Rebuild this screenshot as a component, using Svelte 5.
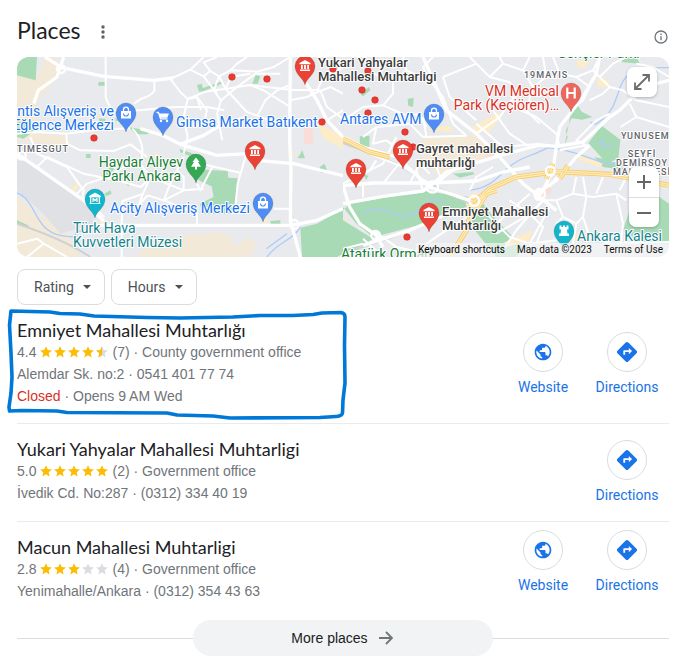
<script>
  const star = 'M7 1.2l1.7 3.9 4.2.4-3.2 2.8.9 4.2L7 10.3l-3.6 2.200.9-4.200L1.100 5.500l4.200-.4z';

  const places = [
    { name: 'Emniyet Mahallesi Muhtarlığı', rating: '4.4', full: 4, half: true, count: 7, kind: 'County government office', address: 'Alemdar Sk. no:2 · 0541 401 77 74', closed: 'Opens 9 AM Wed', website: true, marked: true },
    { name: 'Yukari Yahyalar Mahallesi Muhtarligi', rating: '5.0', full: 5, half: false, count: 2, kind: 'Government office', address: 'İvedik Cd. No:287 · (0312) 334 40 19', website: false },
    { name: 'Macun Mahallesi Muhtarligi', rating: '2.8', full: 3, half: false, count: 4, kind: 'Government office', address: 'Yenimahalle/Ankara · (0312) 354 43 63', website: true }
  ];

  // The base map is two tiles, each 978 × 600 units.
  const tiles = [
    {
      sand: [
        'M0 55L60 62 85 0H120L118 60 100 90 62 130 60 230 150 235 165 275 90 262 0 250Z',
        'M0 415L40 450 60 470 110 500 150 530 175 560 190 600H0Z',
        'M350 600L400 560 470 540 560 530 610 525 640 535 650 570 690 540 720 560 700 600Z'
      ],
      shade: ['M0 300L60 330 240 455 225 500 130 530 80 470 0 400Z'],
      park: [
        'M0 0H60L56 70 0 55Z',
        'M0 195L40 190 60 215 20 245 0 240Z',
        'M520 352L560 338 632 342 634 362 662 364 660 420 640 470 560 470 548 440 590 420 584 388 556 376Z',
        'M850 512L900 500 978 455V590L960 600H855Z',
        'M244 75H264V86H244ZM540 84L554 80 560 102 546 104ZM550 96L612 74 614 80 554 104ZM716 54L730 58 722 80 706 80Z',
        'M334 210L400 222 392 232 356 232ZM246 184L266 186 262 204 248 200ZM295 184L320 186 318 194 296 192ZM208 290L222 292 220 304 206 302Z',
        'M250 360L280 330 292 336 258 376ZM326 380L338 374 336 388ZM262 410L280 400 284 410 268 418ZM488 276L540 294 520 298 490 286Z',
        'M842 304L856 280 864 304ZM908 330L922 320 930 338 912 348ZM760 492L790 490 790 502 762 504ZM0 490L36 506 30 512 0 500Z'
      ],
      block: ['M160 400L182 372 188 382 168 410ZM408 290L424 284 414 310ZM246 488L300 520 290 530 250 500ZM736 486L752 484 752 500 736 498ZM816 300L826 280 832 300ZM900 200L978 235V275L920 245ZM865 40L880 50 870 70Z'],
      pink: ['M860 210H888V260H862Z'],
      water: ['M0 408C60 430 50 520 130 535S150 520 200 522', 'M750 600C780 555 830 550 850 510', 'M748 575L810 530'],
      rail: ['M0 500C90 530 160 560 220 600'],
      minor: [
        'M266 0V120Q275 150 290 160L370 160 440 152',
        'M412 72L412 102Q400 118 375 124L350 140',
        'M410 72L460 66 520 38 560 0',
        'M460 66L490 105 512 126 500 180 512 240 500 290',
        'M512 126L560 106 590 100 626 96 660 90 700 84 820 98 910 100',
        'M512 126L540 120 570 160 560 200 530 210',
        'M520 38L560 58 580 42 606 58 626 96 690 165 760 190 900 190',
        'M606 58L590 100 612 130 600 170 616 250',
        'M560 58L600 110M540 120L552 160',
        'M580 42L560 16 600 0M606 58L640 40 720 44 770 30 820 0',
        'M626 96L640 60 700 50M612 130L660 90 716 50 790 50',
        'M690 0L660 20 640 40M700 84L740 100 820 150',
        'M722 175L745 130 780 100 820 84',
        'M440 152L480 150 570 150 622 160',
        'M0 230L60 225 148 230 240 218 340 214',
        'M148 230L150 260 190 280 290 282 340 262 390 300',
        'M60 330L90 300 200 350 300 370 372 390 400 360 500 400 560 395',
        'M40 240L60 290 150 330 200 400 196 420',
        'M346 215Q390 260 370 320L400 360 378 410 360 460',
        'M370 320L320 330 270 360 210 380 180 410',
        'M392 415L440 430 460 380 480 340 500 300',
        'M392 415L360 450M440 430L540 470V504M480 340L500 360 500 400 440 430',
        'M540 380L550 400 586 330M560 322L672 348',
        'M688 290L662 380 656 440',
        'M770 455H820M380 410L316 432 314 500V600',
        'M196 420L262 480M0 560L60 545 80 560 150 600M80 560L30 600',
        'M900 100L920 60 978 30M910 100L930 150 978 185M866 76L890 110 930 190 978 160',
        'M890 110L940 90 978 110M820 130L870 120 890 110'
      ],
      major: [
        'M50 140L64 100 120 60 140 0',
        'M84 0L135 32 260 58 410 70 470 62',
        'M370 215L440 236 490 262 600 295 690 290 720 310 830 320 978 356',
        'M490 262L560 235 610 205 690 180',
        'M820 0L818 250 822 340 820 490 850 600',
        'M866 76L900 130 930 190 978 240',
        'M250 505H820L900 490 978 455',
        'M0 290L60 332 200 430 260 492'
      ],
      highway: [],
      junctions: [[132, 36, 12], [832, 502, 13], [14, 296, 12]]
    },
    {
      sand: ['M240 238L400 230 440 262 470 300 330 342 280 352 240 300Z', 'M0 500L10 470 22 520 0 550Z'],
      shade: [],
      park: [
        'M0 460L20 440 240 402 380 420 390 440 280 490 130 530 90 540 40 500 0 450Z',
        'M0 490L90 545 60 565 0 590Z',
        'M736 258L776 206 832 248 826 305 790 318Z',
        'M684 166L704 145 716 164 748 180 718 188 686 184 668 222 674 240 664 270Z',
        'M380 500L420 440 460 490 540 570 520 600H460Z',
        'M870 430L920 400 978 440V560L900 560 840 520Z',
        'M50 238L80 236 78 290 52 280ZM754 300L800 310 850 340 780 330ZM194 126L212 122 210 150 196 146ZM52 110L78 90 82 100 60 118ZM820 0L880 0 890 20 840 16Z',
        'M330 350L390 345 394 352 350 362ZM60 350L76 356 70 370Z'
      ],
      block: ['M386 210L470 166 476 178 440 222 400 226ZM484 556L570 520 560 550 490 570ZM664 530L740 525 720 550 670 545ZM700 10L740 14 720 34 704 30ZM760 64L800 68 790 90 766 90ZM250 220L320 205 326 225ZM366 430L400 400 410 440 380 480ZM700 290L780 320 770 330 710 310Z'],
      pink: ['M590 410L620 388 626 402 602 424ZM430 280L452 276 454 310 430 300ZM220 310L240 300 242 320Z'],
      water: [
        'M978 32C880 30 850 40 832 90S810 160 780 185 760 200 742 196',
        'M380 400C470 390 470 330 550 300S600 270 640 275 700 290 760 310 820 300 850 340',
        'M60 470C130 430 150 490 200 475S230 420 300 430',
        'M764 255L790 268 812 258M780 240V270'
      ],
      rail: ['M0 590L150 540 330 470', 'M0 258L160 320 260 380 380 440'],
      minor: [
        'M0 190L60 150 120 145 190 175 230 172 250 210',
        'M60 0L90 50 150 70 190 40 180 0M150 70L150 110 120 145M190 40L260 70 300 120 330 200',
        'M260 70L240 30 270 0M300 60L400 20 380 0M300 60L320 120 400 190',
        'M400 20L440 60 500 76 520 110 510 150 580 180 640 230 650 270',
        'M440 60L480 20 540 40 560 0M480 20L470 0M540 40L570 90 550 160 590 200',
        'M570 90L610 60 640 60M610 60L600 0M630 0L650 50 700 60 750 40 770 0',
        'M700 60L740 90 720 130 680 160M750 40L800 90 840 100 880 130 978 150',
        'M740 130L780 110 800 90M770 60L810 20 850 0M978 60L930 30 880 20',
        'M800 170L760 190 735 215 700 250 730 265 650 280',
        'M832 210L880 180 978 210M880 180L860 140',
        'M60 240L100 210 200 200 240 240 370 236',
        'M100 210L90 260 130 250 170 280M240 180L250 238M330 200L370 236',
        'M80 290L180 330 260 380M60 350L120 320 160 240M0 380L80 340 100 310M120 380L160 330 200 280',
        'M200 380L230 320 260 350M300 380L280 330 260 320M60 380V420M220 340L240 400',
        'M280 380L330 340 400 310M380 400L400 360 450 330M400 200L480 270 590 260',
        'M450 160L500 230 560 270M400 230L470 180 520 110',
        'M700 360L690 410 640 430 600 430M690 410L750 420 820 410 850 430M720 360L730 420 720 480 740 540',
        'M760 410L780 360M640 430L660 480 640 500M620 450L560 560 580 600M600 430L520 520 480 580',
        'M540 450L600 510 580 560M500 430L560 470 520 520M820 410L840 500 830 600M740 540L800 560 978 555',
        'M560 470L600 430M430 470L500 540 560 560 640 550M640 360L620 390',
        'M660 480L700 500 720 480M700 500L690 560',
        'M460 500L560 410M460 530L580 460M850 360L830 400M0 575L60 560M60 545L120 600M90 520L160 570 250 590',
        'M190 600L310 520 390 470'
      ],
      major: [
        'M0 386L90 378 260 378 400 372 480 345 560 330',
        'M0 440L120 418 240 402 270 380 310 345 470 296 590 264 640 268',
        'M0 240L60 270 160 300 260 390 380 430 400 450',
        'M0 386L20 450 50 500 100 535 120 570',
        'M240 0L280 90 310 160 400 230 470 300 540 380 590 420 640 460',
        'M640 268L650 210 720 120 760 50 770 0',
        'M640 268L720 255 800 180 830 160 900 90 978 70',
        'M640 268L630 340 600 400 580 430',
        'M60 565L200 520 330 465',
        'M580 410L640 370 700 300 740 265'
      ],
      highway: [
        'M320 600L370 520 390 440 440 395 520 360 640 344 800 352 978 385',
        'M400 460L430 410 460 400M610 365L630 320M650 365L675 325M380 430L396 440 410 420',
        'M0 245L80 285 140 300'
      ],
      junctions: [[268, 390, 17], [98, 535, 13], [590, 412, 16], [622, 342, 13], [394, 432, 15]]
    }
  ];

  const dots = [[232, 77], [267, 79], [322, 122], [333, 69], [368, 71], [362, 90], [375, 100], [368, 113], [405, 132], [94, 138], [407, 237], [413, 147]];

  const pins = [
    { x: 126, y: 113, color: '#4f8df5', icon: 'bag' },
    { x: 163, y: 117, color: '#4f8df5', icon: 'cart' },
    { x: 434, y: 114, color: '#4f8df5', icon: 'bag' },
    { x: 263, y: 203, color: '#4f8df5', icon: 'bag' },
    { x: 196, y: 164, color: '#34a853', icon: 'tree' },
    { x: 95, y: 199, color: '#12b5cb', icon: 'museum' },
    { x: 564, y: 231, color: '#12b5cb', icon: 'castle' },
    { x: 571, y: 93, color: '#ee675c', icon: 'hospital' },
    { x: 305, y: 66, color: '#ea4335', icon: 'office' },
    { x: 255, y: 151, color: '#ea4335', icon: 'office' },
    { x: 356, y: 169, color: '#ea4335', icon: 'office' },
    { x: 403, y: 150, color: '#ea4335', icon: 'office' },
    { x: 429, y: 213, color: '#ea4335', icon: 'office' }
  ];

  const labels = [
    { x: 114, y: 116, anchor: 'end', tone: 'shop', text: 'ntis Alışveriş ve' },
    { x: 114, y: 130, anchor: 'end', tone: 'shop', text: 'Eğlence Merkezi' },
    { x: 176, y: 127, tone: 'shop', text: 'Gimsa Market Batıkent' },
    { x: 340, y: 124, tone: 'shop', text: 'Antares AVM' },
    { x: 110, y: 213, tone: 'shop', text: 'Acity Alışveriş Merkezi' },
    { x: 183, y: 167, anchor: 'end', tone: 'park', text: 'Haydar Aliyev' },
    { x: 181, y: 181, anchor: 'end', tone: 'park', text: 'Parkı Ankara' },
    { x: 341, y: 259, tone: 'park', text: 'Atatürk Orman' },
    { x: 557, y: 58, tone: 'park', text: 'Gençler Parkı' },
    { x: 73, y: 233, tone: 'museum', text: 'Türk Hava' },
    { x: 73, y: 247, tone: 'museum', text: 'Kuvvetleri Müzesi' },
    { x: 577, y: 241, tone: 'museum', text: 'Ankara Kalesi' },
    { x: 559, y: 96, anchor: 'end', tone: 'hospital', text: 'VM Medical' },
    { x: 559, y: 110, anchor: 'end', tone: 'hospital', text: 'Park (Keçiören)…' },
    { x: 318, y: 67, tone: 'result', text: 'Yukari Yahyalar' },
    { x: 318, y: 81, tone: 'result', text: 'Mahallesi Muhtarligi' },
    { x: 416, y: 153, tone: 'result', text: 'Gayret mahallesi' },
    { x: 416, y: 167, tone: 'result', text: 'muhtarlığı' },
    { x: 442, y: 216, tone: 'result', text: 'Emniyet Mahallesi' },
    { x: 442, y: 230, tone: 'result', text: 'Muhtarlığı' },
    { x: 17, y: 152, tone: 'district', text: 'TIMESGUT' },
    { x: 524, y: 78, tone: 'district', text: '19MAYIS' },
    { x: 621, y: 139, tone: 'district', text: 'YUNUSEM' },
    { x: 642, y: 157, anchor: 'middle', tone: 'district', text: 'SEYFİ' },
    { x: 642, y: 166, anchor: 'middle', tone: 'district', text: 'DEMİRSOY' },
    { x: 642, y: 175, anchor: 'middle', tone: 'district', text: 'MAHALLESİ' }
  ];
</script>

<main>
  <header>
    <h1>Places</h1>
    <button class="icon-button" aria-label="About these results">
      <svg width="16" height="16" viewBox="0 0 16 16" fill="#5f6368"><circle cx="8" cy="3" r="1.700" /><circle cx="8" cy="8" r="1.700" /><circle cx="8" cy="13" r="1.700" /></svg>
    </button>
    <button class="icon-button info" aria-label="Information">
      <svg width="14" height="14" viewBox="0 0 14 14" fill="none" stroke="#70757a"><circle cx="7" cy="7" r="6" stroke-width="1.300" /><path d="M7 6.200v4M7 3.500v1.400" stroke-width="1.400" /></svg>
    </button>
  </header>

  <section class="map" aria-label="Map">
    <svg class="canvas" viewBox="17 57 652 200" preserveAspectRatio="xMidYMid slice">
      <rect x="17" y="57" width="652" height="200" fill="#e8eaed" />
      {#each tiles as tile, i}
        <svg x={17 + i * 326} y="57" width="326" height="200" viewBox="0 0 978 600">
          {#each tile.sand as d}<path {d} fill="#f2e9d8" />{/each}
          {#each tile.shade as d}<path {d} fill="#dfe1e5" />{/each}
          {#each tile.park as d}<path {d} fill="#a8dab5" />{/each}
          {#each tile.block as d}<path {d} fill="#fdecc8" />{/each}
          {#each tile.pink as d}<path {d} fill="#fadcd9" />{/each}
          {#each tile.water as d}<path {d} class="water" />{/each}
          {#each tile.rail as d}<path {d} class="rail" />{/each}
          {#each tile.minor as d}<path {d} class="minor" />{/each}
          {#each tile.major as d}<path {d} class="major" />{/each}
          {#each tile.highway as d}<path {d} class="highway" />{/each}
          {#each tile.highway as d}<path {d} class="highway-fill" />{/each}
          {#each tile.highway as d}<path {d} class="highway-core" />{/each}
          {#each tile.junctions as [cx, cy, r]}<circle {cx} {cy} {r} class="junction" />{/each}
        </svg>
      {/each}

      {#each dots as [x, y]}
        <circle cx={x} cy={y} r="3.300" fill="#ea3b30" stroke="#c5221f" stroke-width=".5" />
      {/each}

      {#each labels as label}
        <text class={label.tone} x={label.x} y={label.y} text-anchor={label.anchor ?? 'start'}>{label.text}</text>
      {/each}

      {#each pins as pin}
        <g transform="translate({pin.x} {pin.y})">
          <path d="M0 19C-1.500 12-10 9-10 0A10 10 0 1 1 10 0C10 9 1.500 12 0 19Z" fill={pin.color} stroke="#000" stroke-opacity=".18" stroke-width=".8" />
          {#if pin.icon === 'office'}
            <path d="M0-6L5.500-3V-1.800H-5.500V-3ZM-4-1H-2.200V3H-4ZM-.9-1H.9V3H-.9ZM2.200-1H4V3H2.200ZM-5 3.500H5V5H-5Z" fill="#fff" />
          {:else if pin.icon === 'bag'}
            <path d="M-5-2H5V5.500H-5Z" fill="#fff" />
            <path d="M-2.500-2V-3.300A2.500 2.500 0 0 1 2.500-3.300V-2" fill="none" stroke="#fff" stroke-width="1.300" />
            <path d="M-2.500.5A2.500 2.500 0 0 0 2.500.5" fill="none" stroke={pin.color} stroke-width="1.200" />
          {:else if pin.icon === 'cart'}
            <path d="M-6.500-4.500H-4.500L-2.500 1.800H4.500" fill="none" stroke="#fff" stroke-width="1.300" />
            <path d="M-4.200-3.500H6L4.300.8H-2.600Z" fill="#fff" />
            <circle cx="-2" cy="4" r="1.200" fill="#fff" /><circle cx="4" cy="4" r="1.200" fill="#fff" />
          {:else if pin.icon === 'tree'}
            <path d="M0-6.500L3.500-2H2L5 2.800H1V5.500H-1V2.800H-5L-2-2H-3.500Z" fill="#fff" />
          {:else if pin.icon === 'museum'}
            <path d="M0-6L5.500-3V-2H-5.500V-3ZM-5.500 4.500H5.500" fill="#fff" stroke="#fff" stroke-width=".8" />
            <path d="M-4.300-2V4.500M4.300-2V4.500M-2 3V-.5L0 1.500 2-.5V3" fill="none" stroke="#fff" stroke-width="1.200" />
          {:else if pin.icon === 'castle'}
            <path d="M-4.500-5.500H-2.500V-4H-1V-5.500H1V-4H2.500V-5.500H4.500V-1.500H3L3.500 2.500H5V5H-5V2.500H-3.500L-3-1.500H-4.500Z" fill="#fff" />
          {:else}
            <path d="M-3.700-5.500V5.500M3.700-5.500V5.500M-3.700 0H3.700" fill="none" stroke="#fff" stroke-width="2.200" />
          {/if}
        </g>
      {/each}
    </svg>

    <button class="expand" aria-label="Expand map">
      <svg width="18" height="18" viewBox="0 0 18 18" fill="none" stroke="#6b6b6b" stroke-width="1.800"><path d="M2 16L16 2M9.500 2H16V8.500M2 9.500V16H8.500" /></svg>
    </button>
    <div class="zoom">
      <button aria-label="Zoom in"><svg width="14" height="14" viewBox="0 0 14 14"><path d="M7 0V14M0 7H14" stroke="#666" stroke-width="2" /></svg></button>
      <button aria-label="Zoom out"><svg width="14" height="14" viewBox="0 0 14 14"><path d="M0 7H14" stroke="#666" stroke-width="2" /></svg></button>
    </div>
    <div class="credits">
      <button>Keyboard shortcuts</button>
      <span>Map data ©2023</span>
      <a href="#terms">Terms of Use</a>
    </div>
  </section>

  <div class="filters">
    {#each ['Rating', 'Hours'] as filter}
      <button>{filter}<svg width="8" height="4" viewBox="0 0 8 4"><path d="M0 0H8L4 4Z" fill="#4d5156" /></svg></button>
    {/each}
  </div>

  <section class="results">
    {#each places as place}
      <article>
        {#if place.marked}
          <svg class="marker" width="346" height="120" viewBox="4 304 346 120" fill="none" stroke="#0078d7" stroke-width="3.600" stroke-linejoin="round" stroke-linecap="round">
            <path d="M11 311L50 312 60 313.500 80 314 94 316 147 317.500 180 318 233 317 260 315.500 293 315.500 313 314.500 322 313 341 312.500Q345 313 345 317L344.500 345 345 383 343 400 342.500 413Q342 416 336 416.500L320 417.500 230 418 213 416 177 415 167 413 67 412.500 57 411 22 410.500 9.500 411 9 407 11 393 12 377 11 353 9.500 325Z" />
          </svg>
        {/if}
        <div class="details">
          <h2>{place.name}</h2>
          <p class="rating">
            <span>{place.rating}</span>
            <svg width="70" height="14" viewBox="0 0 70 14" role="img" aria-label="Rated {place.rating} out of 5">
              <defs><clipPath id="half-star"><rect width="7" height="14" /></clipPath></defs>
              {#each [0, 1, 2, 3, 4] as i}
                <g transform="translate({i * 14} 0)">
                  <path d={star} fill={i < place.full ? '#fbbc04' : '#dadce0'} />
                  {#if i === place.full && place.half}<path d={star} fill="#fbbc04" clip-path="url(#half-star)" />{/if}
                </g>
              {/each}
            </svg>
            <span>({place.count}) · {place.kind}</span>
          </p>
          <p>{place.address}</p>
          {#if place.closed}<p><span class="closed">Closed</span> · {place.closed}</p>{/if}
        </div>
        <nav aria-label={place.name}>
          {#if place.website}
            <a href="#website">
              <span class="disc"><svg width="20" height="20" viewBox="0 0 24 24" fill="#1a73e8"><path d="M12 2C6.480 2 2 6.480 2 12s4.480 10 10 10 10-4.480 10-10S17.520 2 12 2zm-1 17.930c-3.950-.49-7-3.850-7-7.930 0-.62.080-1.210.21-1.790L9 15v1c0 1.100.9 2 2 2v1.930zm6.900-2.540c-.26-.81-1-1.390-1.900-1.390h-1v-3c0-.55-.45-1-1-1H8v-2h2c.55 0 1-.45 1-1V7h2c1.100 0 2-.9 2-2v-.41c2.930 1.190 5 4.060 5 7.410 0 2.080-.8 3.970-2.100 5.390z" /></svg></span>
              Website
            </a>
          {/if}
          <a href="#directions">
            <span class="disc"><svg width="22" height="22" viewBox="0 0 24 24" fill="#1a73e8"><path d="M22.430 10.590l-9.010-9.010c-.75-.75-2.070-.76-2.830 0l-9 9c-.78.78-.78 2.040 0 2.820l9 9c.39.39.9.58 1.410.58.51 0 1.020-.19 1.410-.58l8.990-8.990c.79-.76.8-2.020.03-2.820zM14 14.500V12h-4v3H8v-4c0-.55.45-1 1-1h5V7.500l3.500 3.500-3.500 3.500z" /></svg></span>
            Directions
          </a>
        </nav>
      </article>
    {/each}
  </section>

  <div class="more">
    <a href="#more">More places
      <svg width="14" height="14" viewBox="0 0 14 14" fill="none" stroke="#70757a" stroke-width="1.800"><path d="M0 7H13M7 1L13 7 7 13" /></svg>
    </a>
  </div>
</main>

<style>
  :global(body) { margin: 0; background: #fff; }
  main { padding: 0 25px 3px 17px; font-family: "Liberation Sans", Arial, sans-serif; font-size: 14px; color: #70757a; }
  button { font: inherit; padding: 0; border: 0; background: none; cursor: pointer; }
  a { text-decoration: none; color: inherit; }
  svg { display: block; flex: none; }
  header { display: flex; align-items: center; height: 57px; padding-top: 3px; box-sizing: border-box; }
  h1 { margin: 0; font: 400 23px/28px Lato, "Open Sans", sans-serif; color: #202124; }
  .icon-button { margin-left: 15px; padding-top: 4px; }
  .info { margin-left: auto; padding: 14px 1px 0 0; }

  .map { position: relative; height: 200px; border-radius: 12px; overflow: hidden; }
  .canvas { width: 100%; height: 100%; }
  .canvas path { stroke-linejoin: round; }
  .water { fill: none; stroke: #aecbfa; stroke-width: 4px; }
  .rail { fill: none; stroke: #cdd0d5; stroke-width: 6px; }
  .minor { fill: none; stroke: #fff; stroke-width: 6px; }
  .major { fill: none; stroke: #fff; stroke-width: 10px; }
  .highway { fill: none; stroke: #f9c95c; stroke-width: 15px; }
  .highway-fill { fill: none; stroke: #fdecc0; stroke-width: 10px; }
  .highway-core { fill: none; stroke: #f9c95c; stroke-width: 2px; }
  .junction { fill: none; stroke: #fff; stroke-width: 7px; }
  text { font: 400 14px Roboto, sans-serif; stroke: #fff; stroke-width: 2px; stroke-linejoin: round; paint-order: stroke; }
  .shop { fill: #1a73e8; }
  .park { fill: #188038; }
  .museum { fill: #12858d; }
  .hospital { fill: #d93025; }
  .result { fill: #3c3c3c; font-size: 13px; font-weight: 500; }
  .district { fill: #5f6368; font-size: 9px; font-weight: 500; letter-spacing: 1px; }

  .expand, .zoom { position: absolute; background: #fff; border-radius: 7px; box-shadow: 0 1px 3px rgba(0, 0, 0, .25); }
  .expand { top: 10px; right: 12px; width: 30px; height: 30px; display: grid; place-items: center; }
  .zoom { right: 10px; bottom: 30px; width: 30px; }
  .zoom button { display: grid; place-items: center; width: 30px; height: 30px; }
  .zoom button + button { border-top: 1px solid #dadce0; }
  .credits { position: absolute; right: 0; bottom: 0; display: flex; gap: 12px; height: 14px; padding: 0 6px 0 2px; background: rgba(245, 245, 245, .7); color: #111; font: 10px/14px Roboto, sans-serif; }

  .filters { display: flex; gap: 6px; margin-top: 12px; }
  .filters button { display: flex; align-items: center; gap: 9px; height: 36px; box-sizing: border-box; padding: 0 13px 0 16px; border: 1px solid #dadce0; border-radius: 8px; color: #4d5156; font: 14px/20px Roboto, sans-serif; }

  article { position: relative; display: flex; justify-content: space-between; border-bottom: 1px solid #ebebeb; }
  article:last-child { border: 0; }
  .details { padding: 14px 0 17px; }
  article:first-child .details { padding-bottom: 16px; }
  article:last-child .details { padding-bottom: 0; }
  .marker { position: absolute; left: -13px; top: -1px; pointer-events: none; }
  h2 { margin: 0; font: 400 18px/22px Lato, "Open Sans", sans-serif; color: #202124; }
  p { margin: 0; line-height: 22px; }
  .rating { display: flex; align-items: center; gap: 3px; }
  .closed { color: #d93025; }
  nav { display: flex; align-items: center; }
  nav a { display: flex; flex-direction: column; align-items: center; gap: 5px; width: 84px; color: #1a73e8; font: 14px/20px Roboto, sans-serif; }
  .disc { display: grid; place-items: center; width: 38px; height: 38px; border: 1px solid #dadce0; border-radius: 50%; }

  .more { display: flex; align-items: center; margin-top: 18px; }
  .more::before, .more::after { content: ""; flex: 1; height: 1px; background: #dadce0; }
  .more a { display: flex; align-items: center; justify-content: center; gap: 11px; width: 298px; padding-right: 2px; height: 36px; border-radius: 18px; background: #f1f3f4; color: #202124; }
</style>
